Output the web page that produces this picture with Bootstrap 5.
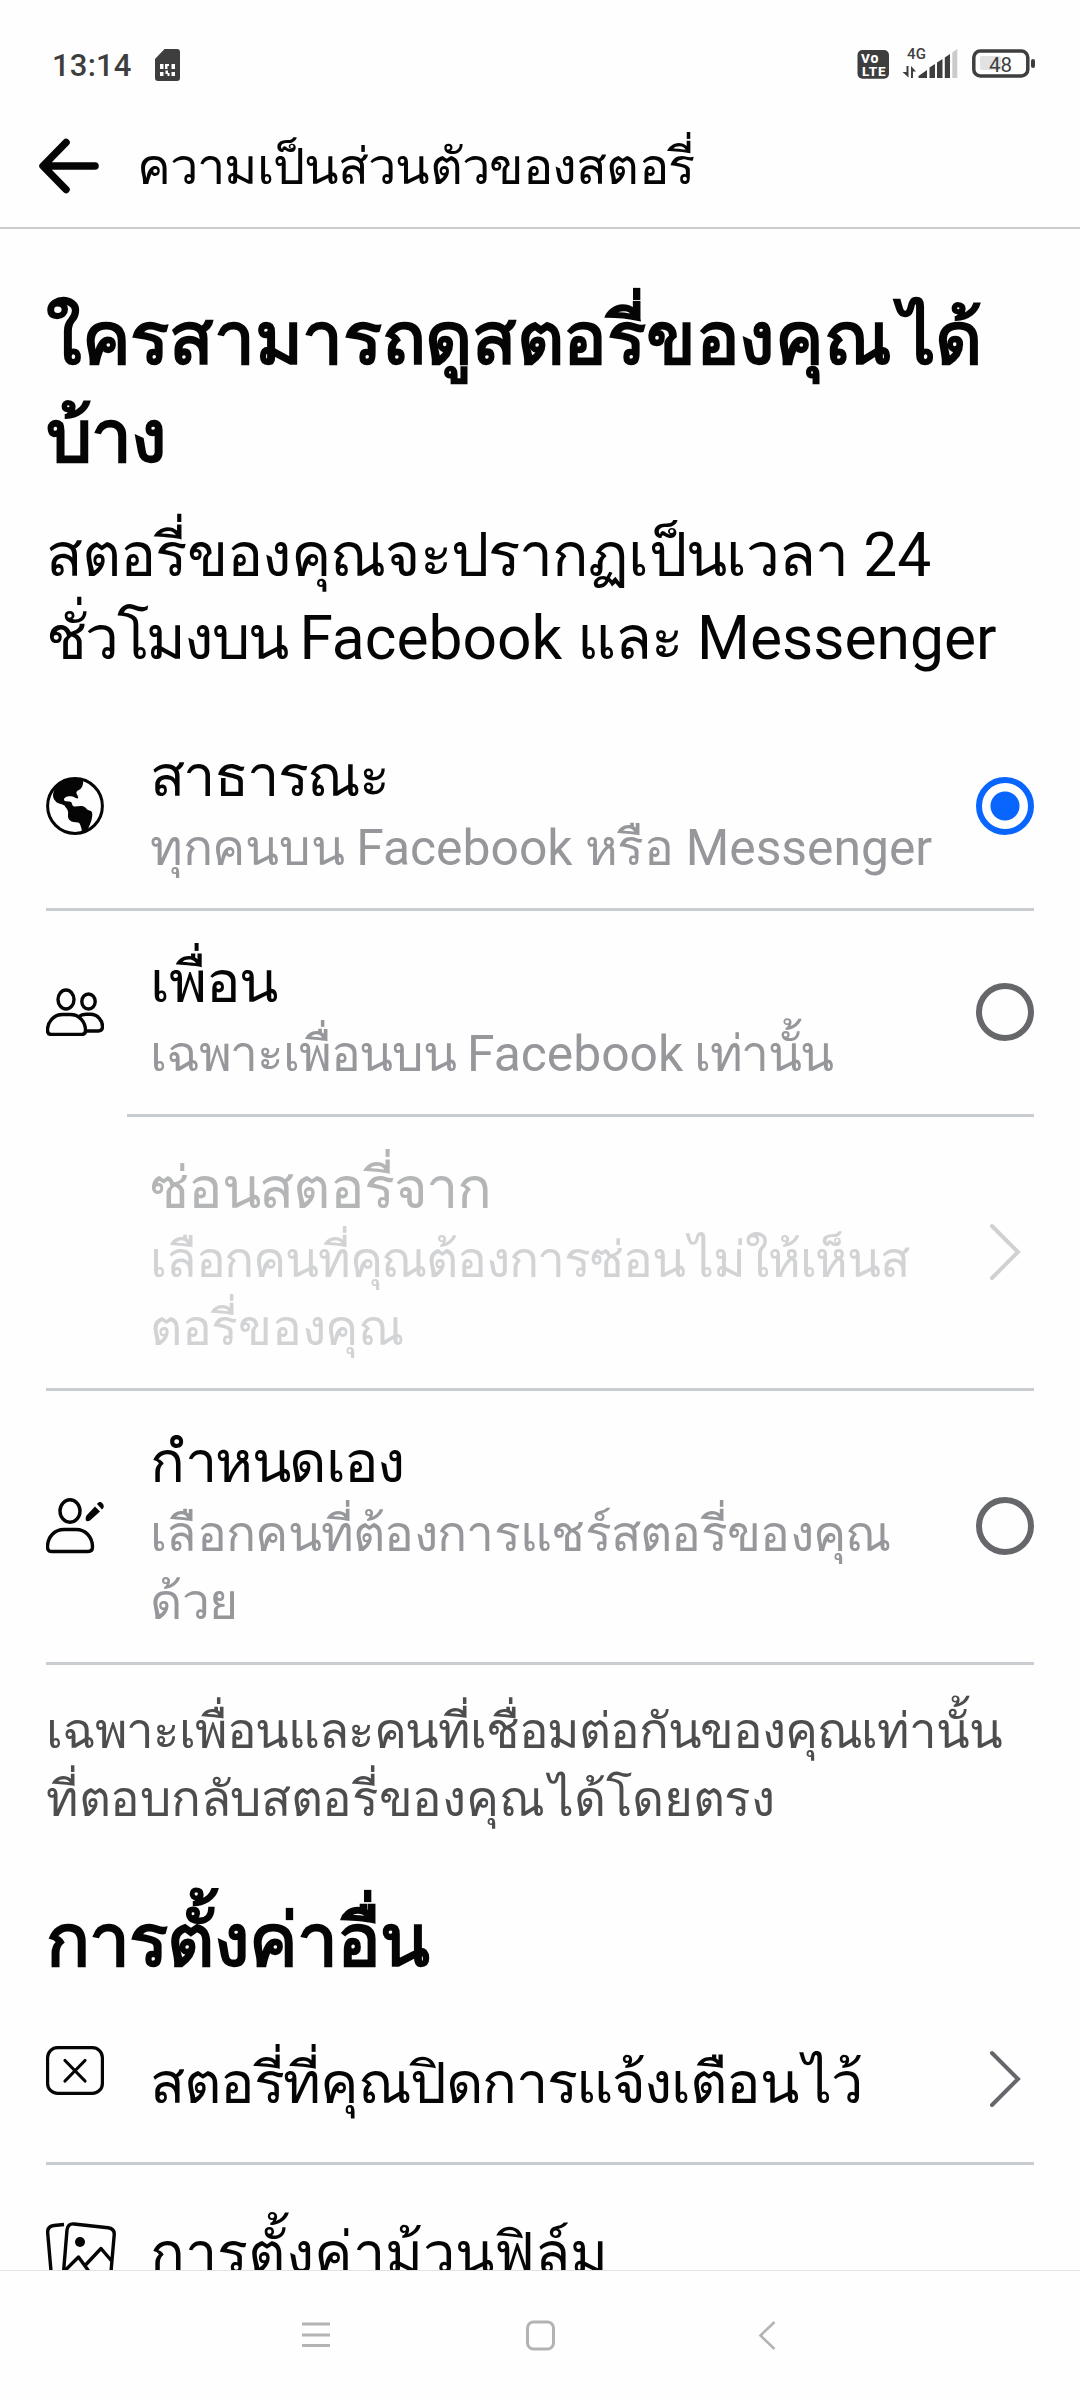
<!DOCTYPE html>
<html lang="th">
<head>
<meta charset="utf-8">
<meta name="viewport" content="width=device-width, initial-scale=1">
<title>ความเป็นส่วนตัวของสตอรี่</title>
<link href="https://cdn.jsdelivr.net/npm/bootstrap@5.3.0/dist/css/bootstrap.min.css" rel="stylesheet">
<style>
body{background:#fefefe;color:#050505;font-family:Roboto,"Noto Sans",sans-serif;letter-spacing:-.3px}
svg{display:block;flex:none}
.phone{width:1080px;height:2400px}
.latin{letter-spacing:0}
.track-1{letter-spacing:-.85px}
.track-2{letter-spacing:-1.2px}
.track-3{letter-spacing:-1.6px}
.track-4{letter-spacing:-2.2px}
.track-open{letter-spacing:0}
.vowel{margin-left:.1em}
.status{height:104px;padding:44px 44px 0 52px;color:#3e3e3e}
.clock{font-size:31px;font-weight:500;line-height:40px;letter-spacing:.2px;padding-top:2px}
.topbar{height:125px;padding:0 39px;border-bottom:2px solid #c9cbcf}
.topbar h1{font-size:50.7px;font-weight:400;line-height:80px;margin:3px 0 0 38px}
.content{padding:0 46px}
.headline{font-size:73px;font-weight:700;line-height:98px;margin:61px 0 0}
.intro{font-size:60.5px;line-height:83px;margin:28px 0 25px}
.option{padding:33px 0 26px;border-bottom:3px solid #c9ccd1}
.option-title{font-size:57.75px;line-height:76px}
.option-sub{font-size:49.8px;line-height:68px;color:#96979b}
.iconcell{width:104px}
.option>.iconcell,.option>.choice,.option>svg{margin-bottom:9px}
.split{margin-left:81px;border-bottom:3px solid #c9ccd1}
.disabled-title{color:#b4b5b6}
.disabled-sub{color:#d2d3d5}
.choice{width:58px;height:58px;border:6px solid #65676b;border-radius:50%;flex:none}
.choice.on{border-color:#0866ff;background:radial-gradient(circle,#0866ff 14px,transparent 15px)}
.note{font-size:49.4px;line-height:68px;color:#4d4d4f;margin:32px 0 0}
.section{font-size:73px;font-weight:700;line-height:98px;margin:59px 0 5px}
.linkrow{height:170px;border-bottom:3px solid #c9ccd1}
.linkrow .option-title{padding-top:9px}
.navbar-sys{height:130px;border-top:1px solid #e2e2e2;background:#fefefe}
</style>
</head>
<body>
<div class="phone d-flex flex-column overflow-hidden text-nowrap">
  <div class="status d-flex align-items-start justify-content-between flex-shrink-0">
    <div class="d-flex align-items-start">
      <span class="clock">13:14</span>
      <svg style="margin:5px 0 0 23px" width="25" height="32" viewBox="0 0 25 32" fill="#3e3e3e"><path d="M9.500 0H22a3 3 0 0 1 3 3v26a3 3 0 0 1-3 3H3a3 3 0 0 1-3-3V10z"/><path fill="#fff" d="M5 15h3.500v5H5zM10 15h4v2h-1.500v3H10zM16.500 15H20v5h-3.500zM5 23h3.500v4H5zM10.500 21.500H13V24h1.500v3h-2v-2h-2zM16.500 23H20v4h-3.500z"/></svg>
    </div>
    <svg width="180" height="40" viewBox="856 44 180 40" fill="#3e3e3e" font-family="Roboto" letter-spacing="0">
      <rect x="857.500" y="50" width="31.500" height="28.800" rx="5"/>
      <text x="861" y="63" font-size="13.500" font-weight="800" fill="#fff">V</text><text x="870.500" y="63" font-size="14" font-weight="800" fill="#fff">o</text>
      <text x="862" y="75.500" font-size="13.500" font-weight="800" fill="#fff" textLength="23.500">LTE</text>
      <text x="907" y="59" font-size="15" font-weight="500" textLength="19">4G</text>
      <path d="M906.500 66h2V77.500l-6-5.500h4zM911 66l5 5.500h-3V78h-2z"/>
      <path d="M918.500 78v-2l8.500-6v8zM929.500 78V67.500l5.500-3.500v14zM937 78V62.500l5.500-3.500v19zM944.800 78V57.500l5.200-3.500v24z"/>
      <path fill="#cbcbcb" d="M952.300 78V52.500l5-3.500v29z"/>
      <rect x="980" y="56" width="21" height="14" rx="2" fill="#e2e2e2"/>
      <rect x="973.800" y="51" width="54" height="25" rx="6.500" fill="none" stroke="#3e3e3e" stroke-width="3.500"/>
      <rect x="1031" y="59" width="4" height="9" rx="2"/>
      <text x="1000.500" y="71.500" font-size="20.500" text-anchor="middle">48</text>
    </svg>
  </div>
  <header class="topbar d-flex align-items-center flex-shrink-0">
    <svg width="60" height="56" viewBox="0 0 60 56" fill="none" stroke="#050505" stroke-width="7.500" stroke-linecap="round" stroke-linejoin="round"><path d="M27 4.500 4 28l23 23.500M5 28h51"/></svg>
    <h1 class="track-1">ความเป็นส่วนตัวของสตอรี่</h1>
  </header>
  <main class="content flex-grow-1 overflow-hidden">
    <h2 class="headline">ใครสามารถดูสตอรี่ของคุณ<span class="vowel">ได้</span><br><span class="track-1">บ้าง</span></h2>
    <p class="intro"><span class="track-1">สตอรี่ของคุณจะปรากฏเป็นเวลา</span> <span class="latin">24</span><br><span class="track-4">ชั่วโมงบน </span><span class="latin">Facebook</span> <span class="track-1">และ</span> <span class="latin">Messenger</span></p>

    <div class="option d-flex align-items-center">
      <div class="iconcell flex-shrink-0"><svg width="58" height="58" viewBox="0 0 58 58"><circle cx="29" cy="29" r="27.400" fill="none" stroke="#050505" stroke-width="3"/><path fill="#050505" d="M19 3C24 1 32 .500 37 3.500c.500 3-.500 6-2 8-1.500 1.500-4 2-4.500 3.500-.500 2 1.500 3 1.800 6-1.500 1.500-3-1-5.800-1.600C22 18.500 18 20 18 22.500c0 3 5.500 1 7.300 2.800 1.200 1.500.5 3.200 2.200 4 2.500.7 6-.8 9.500 0 2.500.7 3.500 3 5 3.700 2 .5 4 1 4.200 3 .300 3-.2 5-1 8-1 3.500-2.200 5-3.200 8.500-1 2.500-3.500 4-5.500 3.500-1.200-1.500-.5-4-1.500-6-1-2.500-1-4-3-4.500-3-.5-6 0-8.500-2.500-2.500-3-1-6-1.500-8.500-.4-2.500-2.500-4-3.500-6-2.500-2-7-1-9.500-5C6 20 7 16 8.600 12.500 11 8 15 5 19 3z"/></svg></div>
      <div class="flex-grow-1"><div class="option-title track-3">สาธารณะ</div><div class="option-sub">ทุกคนบน <span class="latin">Facebook</span> หรือ <span class="latin">Messenger</span></div></div>
      <div class="choice on"></div>
    </div>

    <div class="option d-flex align-items-center border-0">
      <div class="iconcell flex-shrink-0"><svg width="58" height="48" viewBox="0 0 58 48" fill="none" stroke="#050505" stroke-width="3.400"><ellipse cx="20" cy="11.500" rx="8" ry="9.500"/><ellipse cx="42.500" cy="13.500" rx="6.700" ry="7.500"/><path d="M16.500 26.500h8C33.500 26.500 39.500 34 39.500 42.500c0 2.500-1.500 4-4 4h-30c-2.500 0-4-1.500-4-4C1.500 34 7.500 26.500 16.500 26.500zM33 28.500c2-1.700 4-2.200 7-2.200h4.500c7.500 0 12 6.500 12 12.200 0 3-1.500 4.500-4 4.500h-13"/></svg></div>
      <div class="flex-grow-1"><div class="option-title track-2">เพื่อน</div><div class="option-sub track-2">เฉพาะเพื่อนบน <span class="latin">Facebook</span> <span class="track-3">เท่านั้น</span></div></div>
      <div class="choice"></div>
    </div>
    <div class="split"></div>

    <div class="option d-flex align-items-center">
      <div class="iconcell flex-shrink-0"></div>
      <div class="flex-grow-1"><div class="option-title disabled-title track-2">ซ่อนสตอรี่จาก</div><div class="option-sub disabled-sub"><span class="track-2">เลือกคนที่คุณต้องการซ่อน<span class="vowel">ไม่ให้เห็นส</span></span><br>ตอรี่ของคุณ</div></div>
      <svg class="me-2" width="40" height="58" viewBox="0 0 40 58" fill="none" stroke="#d0d1d3" stroke-width="4" stroke-linecap="round"><path d="m6 3 26 26L6 55"/></svg>
    </div>

    <div class="option d-flex align-items-center">
      <div class="iconcell flex-shrink-0"><svg width="58" height="56" viewBox="0 0 58 56"><g fill="none" stroke="#050505" stroke-width="3.400"><ellipse cx="24" cy="13" rx="10" ry="11.200"/><path d="M18 31.500h12C39.500 31.500 46.500 39 46.500 49c0 3-1.500 4.500-4.500 4.500H6c-3 0-4.500-1.500-4.500-4.500C1.500 39 8.500 31.500 18 31.500z"/></g><path d="m49 8.500 5 5L44 22.500c-1.500 1-3.500 1-4 0-.5-1.500-.5-3.500.5-5zM51 6c2-2.500 4-2.500 5.500-.5 2 2 1.500 4-.5 6z" fill="#050505"/></svg></div>
      <div class="flex-grow-1"><div class="option-title track-3">กำหนดเอง</div><div class="option-sub"><span style="letter-spacing:-.7px">เลือกคนที่ต้องการแชร์สตอรี่ของคุณ</span><br>ด้วย</div></div>
      <div class="choice"></div>
    </div>

    <p class="note"><span class="track-2">เฉพาะเพื่อนและคนที่เชื่อมต่อกันของคุณเท่านั้น</span><br><span>ที่ตอบกลับสตอรี่ของคุณ<span class="vowel">ได้โดยตรง</span></span></p>
    <h2 class="section track-1">การตั้งค่าอื่น</h2>

    <div class="linkrow d-flex align-items-center">
      <div class="iconcell flex-shrink-0 pb-3"><svg width="58" height="49" viewBox="0 0 58 49" fill="none" stroke="#050505" stroke-width="3.200" stroke-linecap="round"><rect x="1.600" y="1.600" width="54.800" height="45.800" rx="10"/><path d="m19 14.500 20 20.500M39 14.500 19 35"/></svg></div>
      <div class="option-title flex-grow-1"><span style="letter-spacing:-1.4px">สตอรี่ที่คุณปิดการแจ้งเตือน<span class="vowel">ไว้</span></span></div>
      <svg class="me-2" width="40" height="58" viewBox="0 0 40 58" fill="none" stroke="#65676b" stroke-width="4" stroke-linecap="round"><path d="m6 3 26 26L6 55"/></svg>
    </div>
    <div class="linkrow d-flex align-items-center">
      <div class="iconcell flex-shrink-0 pt-3"><svg width="70" height="70" viewBox="0 0 70 70" fill="none" stroke="#050505" stroke-width="3.400" stroke-linejoin="round"><path d="M18 2.500 8 3.500C3.500 4 1.300 6.500 1.700 11l4 46c.4 4 2.500 6 7 5.500M28 2l34 3.800c4.500.5 6.500 3 6.200 7L64 61c-.5 4-3 6.500-7.500 6L23 64c-4.500-.5-6.500-3-6-7.500L21 8c.5-4.500 3-6.500 7-6zM19.500 48l13-13L43 49.500M39.500 43 55 26.500 66.500 40"/><circle cx="34" cy="20" r="5" fill="#050505" stroke="none"/></svg></div>
      <div class="option-title flex-grow-1 track-open">การตั้งค่าม้วนฟิล์ม</div>
    </div>
  </main>
  <nav class="navbar-sys flex-shrink-0">
    <svg width="1080" height="129" viewBox="0 2271 1080 129" fill="none" stroke="#b3b3b3" stroke-width="3"><path d="M302 2324h28M302 2335h28M302 2345.500h28"/><rect x="527.500" y="2322" width="26" height="27" rx="6"/><path d="m774.500 2322-14 13.500 14 13.500" stroke-width="2.600"/></svg>
  </nav>
</div>
<script src="https://cdn.jsdelivr.net/npm/bootstrap@5.3.0/dist/js/bootstrap.bundle.min.js"></script>
</body>
</html>
